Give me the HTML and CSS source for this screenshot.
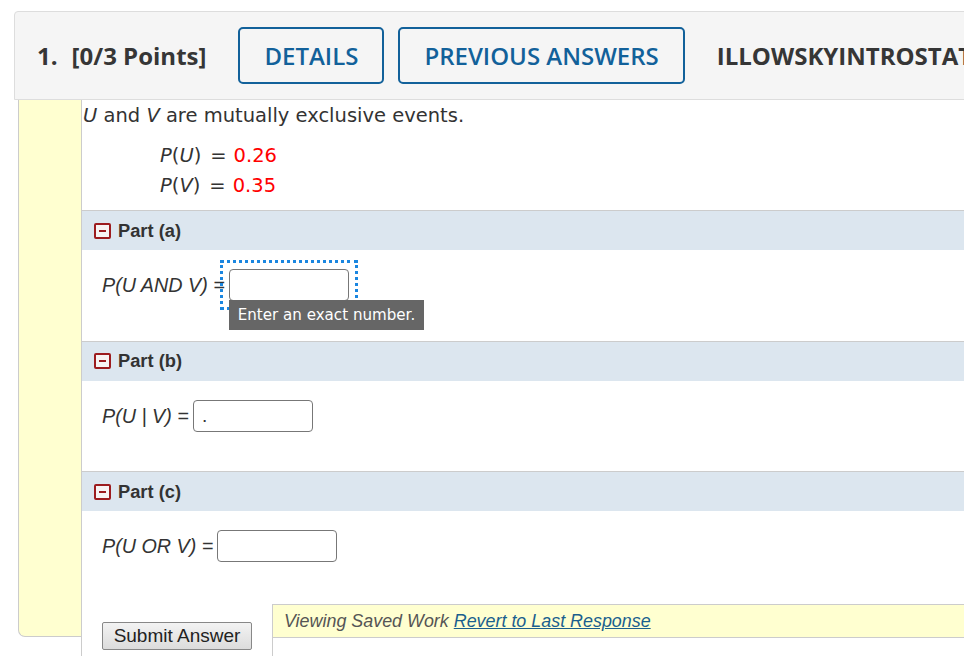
FILE: index.html
```html
<!DOCTYPE html>
<html lang="en">
<head>
<meta charset="utf-8">
<title>Question 1</title>
<link rel="stylesheet" href="styles.css">
</head>
<body>
<div class="page">
  <header class="qhead">
    <span class="qnum">1.</span>
    <span class="qpts">[0/3 Points]</span>
    <button class="btn-outline btn-details" type="button">DETAILS</button>
    <button class="btn-outline" type="button">PREVIOUS ANSWERS</button>
    <span class="qsrc">ILLOWSKYINTROSTAT1 5.2.074.</span>
  </header>
  <div class="qbody">
    <div class="gutter"></div>
    <div class="content">
      <p class="intro"><i>U</i> and <i>V</i> are mutually exclusive events.</p>
      <div class="given">
        <div class="given-row"><i>P</i>(<i>U</i>)<span class="eq">=</span><span class="val">0.26</span></div>
        <div class="given-row"><i>P</i>(<i>V</i>)<span class="eq">=</span><span class="val">0.35</span></div>
      </div>

      <section class="part">
        <div class="part-head"><span class="toggle"></span><span>Part (a)</span></div>
        <div class="part-body">
          <span class="expr">P(U AND V) =</span>
          <span class="field focused">
            <input class="answer" type="text" value="">
            <span class="tip">Enter an exact number.</span>
          </span>
        </div>
      </section>

      <section class="part">
        <div class="part-head"><span class="toggle"></span><span>Part (b)</span></div>
        <div class="part-body">
          <span class="expr">P(U | V) =</span>
          <span class="field"><input class="answer" type="text" value="."></span>
        </div>
      </section>

      <section class="part">
        <div class="part-head"><span class="toggle"></span><span>Part (c)</span></div>
        <div class="part-body">
          <span class="expr">P(U OR V) =</span>
          <span class="field"><input class="answer" type="text" value=""></span>
        </div>
      </section>

      <div class="footer">
        <button class="submit" type="button">Submit Answer</button>
        <div class="saved">
          <div class="saved-bar"><i>Viewing Saved Work</i> <a href="#" class="revert">Revert to Last Response</a></div>
          <div class="saved-body"></div>
        </div>
      </div>
    </div>
  </div>
</div>
</body>
</html>
```

FILE: styles.css
```css
html, body {
  margin: 0;
  padding: 0;
  background: #fff;
}
body {
  width: 964px;
  height: 656px;
  overflow: hidden;
  color: #333;
  font-family: "DejaVu Sans", Verdana, sans-serif;
}
.page {
  width: 1150px;
  padding: 11px 0 0 14px;
}

/* header */
.qhead {
  height: 87px;
  display: flex;
  align-items: center;
  background: #f5f5f5;
  border: 1px solid #ddd;
  border-radius: 4px 0 0 0;
  padding-left: 22px;
  font-family: "Open Sans", sans-serif;
  white-space: nowrap;
}
.qnum, .qpts, .qsrc {
  font-size: 24px;
  font-weight: 700;
  color: #363636;
}
.qnum { margin-right: 14px; }
.btn-outline {
  height: 57px;
  padding: 0 24px;
  border: 2px solid #12619a;
  border-radius: 5px;
  background: transparent;
  color: #12619a;
  font-family: "Open Sans", sans-serif;
  font-size: 24px;
  font-weight: 600;
  margin-right: 14px;
}
.btn-details { margin-left: 32px; }
.qsrc { margin-left: 18px; }

/* body */
.qbody {
  display: flex;
  margin-left: 4px;
}
.gutter {
  flex: none;
  width: 62px;
  height: 536px;
  background: #ffffd0;
  border-left: 1px solid #ccc;
  border-bottom: 1px solid #ccc;
  border-bottom-left-radius: 7px;
}
.content {
  flex: 1;
  border-left: 1px solid #ccc;
  height: 600px;
}
.intro {
  margin: 0;
  padding: 4px 0 0 1px;
  font-size: 19.5px;
  line-height: 24px;
  color: #333;
}
.given {
  margin: 13px 0 9px 78px;
  font-size: 19.5px;
  line-height: 30px;
  color: #333;
}
.eq { margin: 0 7px 0 9px; }
.val { color: #f00; }

/* parts */
.part-head {
  height: 39px;
  display: flex;
  align-items: center;
  gap: 7px;
  padding-left: 12px;
  background: #dce6ef;
  border-top: 1px solid #ccc;
  font-family: "Liberation Sans", Arial, sans-serif;
  font-weight: 700;
  font-size: 18.3px;
  color: #333;
}
.toggle {
  position: relative;
  width: 13px;
  height: 12px;
  border: 2px solid #9c1c1f;
  border-radius: 2px;
  background: #f7f4f4;
}
.toggle::after {
  content: "";
  position: absolute;
  left: 3px;
  right: 3px;
  top: 5px;
  height: 2px;
  background: #9c1c1f;
}
.part-body {
  box-sizing: border-box;
  height: 90.5px;
  padding: 19px 0 0 20px;
  display: flex;
  align-items: flex-start;
  gap: 4px;
}
.expr {
  font-family: "Liberation Sans", Arial, sans-serif;
  font-style: italic;
  font-size: 19.75px;
  line-height: 32px;
  color: #333;
}
.field {
  position: relative;
  display: inline-block;
  height: 32px;
}
.field.focused {
  outline: 3px dotted #1a86e0;
  outline-offset: 6px;
}
.answer {
  box-sizing: border-box;
  width: 120px;
  height: 32px;
  margin: 0;
  padding: 0 8px;
  border: 1px solid #777;
  border-radius: 4px;
  background: #fff;
  font-family: "Liberation Sans", Arial, sans-serif;
  font-size: 19px;
  color: #333;
  outline: none;
}
.tip {
  position: absolute;
  z-index: 2;
  left: 0;
  top: calc(100% - 1px);
  height: 30px;
  padding: 0 9px;
  background: #666;
  color: #fff;
  font-family: "DejaVu Sans", Verdana, sans-serif;
  font-size: 15.1px;
  line-height: 31px;
  white-space: nowrap;
}

/* footer */
.footer {
  display: flex;
  align-items: flex-start;
  padding: 2px 0 0 20px;
}
.submit {
  margin-top: 18px;
  width: 150px;
  height: 28px;
  padding: 0;
  border: 1px solid #888;
  border-radius: 2px;
  background: linear-gradient(#f3f3f3, #dcdcdc);
  font-family: "Liberation Sans", Arial, sans-serif;
  font-size: 19px;
  color: #222;
}
.saved {
  flex: 1;
  margin-left: 20px;
  border-left: 1px solid #ccc;
}
.saved-bar {
  height: 32px;
  line-height: 32px;
  padding-left: 11px;
  background: #ffffd0;
  border-top: 1px solid #ccc;
  border-bottom: 1px solid #ccc;
  font-family: "Liberation Sans", Arial, sans-serif;
  font-size: 17.9px;
  font-style: italic;
  color: #555;
}
.revert {
  color: #1b5f8e;
  text-decoration: underline;
}
.saved-body {
  height: 60px;
}
```
